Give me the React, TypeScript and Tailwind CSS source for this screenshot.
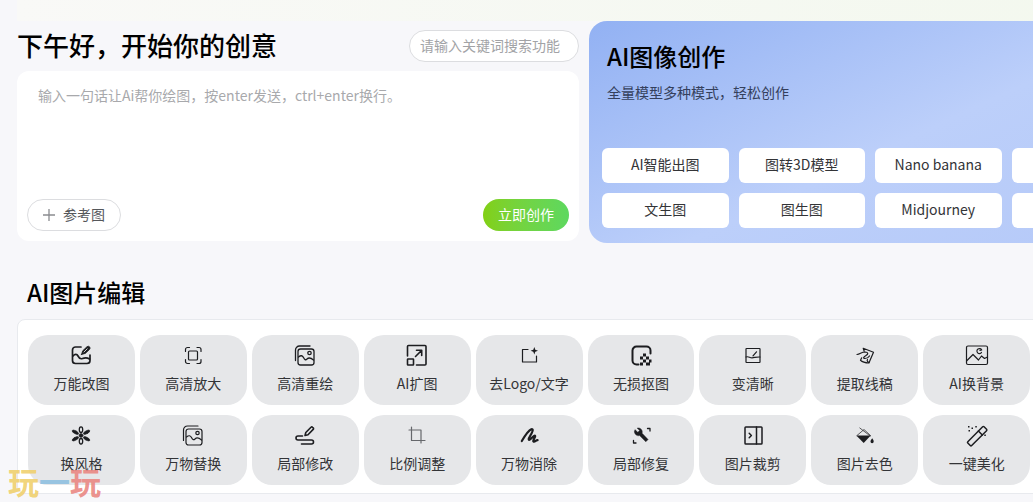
import type { ReactNode } from 'react';

type Tool = { label: string; icon: ReactNode };

const stackedPicture = (
  <>
    <path d="M2.5 16.5V6a4 4 0 0 1 4-4H17" />
    <rect x="5" y="5" width="16" height="16" rx="2.5" />
    <path d="M5.5 13c2.500-2 4-1.500 5 .5s2 3 3.500 1.500 3-2 6.500 1" />
    <circle cx="16.500" cy="9" r="1.700" />
  </>
);

const tools: Tool[] = [
  {
    label: '万能改图',
    icon: (
      <g strokeWidth="1.7">
        <path d="M12 3H6.500A3 3 0 0 0 3.500 6v10.500a3 3 0 0 0 3 3H18a3 3 0 0 0 3-3V11" />
        <path d="M4 12c2-2.500 4-2 5 0s2 3.500 4.500 2.500 4-1.500 7 .5" />
        <path d="M12.500 10.500l1.200-3.700 4.200-4a1.800 1.800 0 0 1 2.600 2.600l-4.200 4-3.800 1.100z" fill="currentColor" strokeWidth="0.8" />
        <path d="M15 8l3.200-3.200" stroke="#e6e7e9" strokeWidth="0.9" />
      </g>
    ),
  },
  {
    label: '高清放大',
    icon: (
      <g strokeWidth="1.200">
        <rect x="7.500" y="7" width="9" height="9" rx="1" />
        <path d="M4.500 7.500V5.500a2 2 0 0 1 2-2h2M16 3.500h2a2 2 0 0 1 2 2v2M20 15.500v2a2 2 0 0 1-2 2h-2M8.500 19.500h-2a2 2 0 0 1-2-2v-2" />
      </g>
    ),
  },
  { label: '高清重绘', icon: <g strokeWidth="1.300">{stackedPicture}</g> },
  {
    label: 'AI扩图',
    icon: (
      <g strokeWidth="1.600">
        <path d="M2.500 12V2.500a1 1 0 0 1 1-1h16.500a1 1 0 0 1 1 1V20a1 1 0 0 1-1 1h-8.500" />
        <rect x="2.500" y="15" width="6" height="6" rx="0.500" />
        <path d="M10.500 12.500l6-6M11.500 6.300h5.200v5.200" />
      </g>
    ),
  },
  {
    label: '去Logo/文字',
    icon: (
      <g strokeWidth="1.200">
        <path d="M11 5.500H5.500v12.500h14V12" />
        <path d="M17.300 3l1 2.700 2.700 1-2.700 1-1 2.700-1-2.700-2.700-1 2.700-1z" fill="currentColor" stroke="none" />
      </g>
    ),
  },
  {
    label: '无损抠图',
    icon: (
      <>
        <path d="M9.500 20.500H7.500A4 4 0 0 1 3.500 16.500V6.500A4 4 0 0 1 7.500 2.500h10A4 4 0 0 1 21.500 6.500v3" strokeWidth="2" />
        <path d="M14 9.500h3v3h-3zM11 12.500h3v3h-3zM17 12.500h3v3h-3zM14 15.500h3v3h-3zM20 15.500h2.500v3h-2.500zM11 18.500h3v3h-3zM17 18.500h4v3h-4z" fill="currentColor" stroke="none" />
      </>
    ),
  },
  {
    label: '变清晰',
    icon: (
      <g strokeWidth="1.200">
        <rect x="5" y="4.500" width="14" height="14" rx="0.500" />
        <path d="M5 13c2.500-1 3.500.8 6 .8s4-1 8-.8M12 11.800l3.500-4" />
      </g>
    ),
  },
  {
    label: '提取线稿',
    icon: (
      <g strokeWidth="1.200">
        <path d="M10.200 4.300l10.300 3.900-4.600 10.800c-3-.2-6.500-1-8.400-2.800l1.200-2.400M10.200 4.300l1 3" />
        <path d="M4 10.500c3-.2 4.500-2.500 8-2.500 3.500.2 3.500 2 1 3.500s-3.300 3-1 3 3.500-1 4.500-2.500M14.500 15.500c-1 1.500.5 2.500 1.500 3" />
      </g>
    ),
  },
  {
    label: 'AI换背景',
    icon: (
      <g strokeWidth="1.200">
        <rect x="1.500" y="2" width="21" height="18.500" rx="1.500" />
        <path d="M2 16.500l6-6 5.500 5.500 3-4 3 2.500 3-1.500M16.500 8.500a2.500 2.500 0 1 1 .2-2.500l-1.700.3" />
      </g>
    ),
  },
  {
    label: '换风格',
    icon: (
      <g strokeWidth="1.300">
        <ellipse cx="12" cy="5.700" rx="1.700" ry="2.800" />
        <ellipse cx="12" cy="17.300" rx="1.700" ry="2.800" />
        <g fill="currentColor" strokeWidth="0.500">
          <ellipse cx="12" cy="5" rx="1.500" ry="3.600" transform="rotate(60 12 11.500)" />
          <ellipse cx="12" cy="5" rx="1.500" ry="3.600" transform="rotate(120 12 11.500)" />
          <ellipse cx="12" cy="5" rx="1.500" ry="3.600" transform="rotate(240 12 11.500)" />
          <ellipse cx="12" cy="5" rx="1.500" ry="3.600" transform="rotate(300 12 11.500)" />
          <circle cx="12" cy="11.500" r="2" />
        </g>
      </g>
    ),
  },
  { label: '万物替换', icon: <g strokeWidth="1.200">{stackedPicture}</g> },
  {
    label: '局部修改',
    icon: (
      <g strokeWidth="1.600">
        <path d="M9.500 12H5a2 2 0 0 0 0 4h13.500a2 2 0 0 1 0 4H8.500" />
        <path d="M12 11.500l.8-3L18 3.200a1 1 0 0 1 1.500 0l.7.7a1 1 0 0 1 0 1.500L15 10.700z" />
      </g>
    ),
  },
  {
    label: '比例调整',
    icon: (
      <path d="M6.500 3v13.500H20M4 6h12v13" strokeWidth="1.200" stroke="#66686c" />
    ),
  },
  {
    label: '万物消除',
    icon: (
      <path d="M4.800 17c3-5 6.500-10.500 9.500-11.700 2.200-.6 1.500 1.700.2 4.200s-3.800 6-2.300 6.300 4-4.500 5.600-4.200-2.800 5.500-1.200 6 2.400-1.600 4-1.400" strokeWidth="2.200" />
    ),
  },
  {
    label: '局部修复',
    icon: (
      <>
        <path d="M18.500 4.500H21V7M4.500 16.500V19H7" strokeWidth="1.300" />
        <path d="M6.200 5.800l2.600 2.500 1.800-1.800-2.500-2.400c2.500-.8 5.300 1 5.200 3.900l-.2 1.200 6 6.300-2.300 2.300-6.200-6.200c-2.900.8-5.500-1.500-5.200-4.500z" fill="currentColor" strokeWidth="0.400" />
      </>
    ),
  },
  {
    label: '图片裁剪',
    icon: (
      <g strokeWidth="1.500">
        <rect x="4" y="3" width="17" height="17" rx="0.800" />
        <path d="M15.500 3v17M8.200 9.300l2.200 2.200-2.200 2.200" />
      </g>
    ),
  },
  {
    label: '图片去色',
    icon: (
      <>
        <path d="M6.800 4l10.400 8M4 11.500l7-6 6.500 6" strokeWidth="0.700" />
        <path d="M3.300 11.500h14.400l-7 7.500z" fill="currentColor" stroke="none" />
        <path d="M19.200 14.300c1 1.400 1.500 2.300 1.500 3.200a1.500 1.700 0 0 1-3.200 0c0-.9.700-1.800 1.700-3.200z" fill="currentColor" stroke="none" />
      </>
    ),
  },
  {
    label: '一键美化',
    icon: (
      <>
        <g transform="rotate(45 12 12)" strokeWidth="1.500">
          <rect x="9.500" y="0.500" width="5.500" height="23" rx="1" />
          <path d="M9.500 7.500H15" />
        </g>
        <path d="M3 2h1.500v1.500H3zM6.500 3.500H8V5H6.500zM10.300 2h1.500v1.500h-1.500zM3.500 6H5v1.500H3.500zM19.300 10.500h1.500V12h-1.500z" fill="currentColor" stroke="none" />
      </>
    ),
  },
  { label: 'AI消除', icon: <path d="M5 16l8-9 6 5-6 7H8z" strokeWidth="1.400" /> },
  { label: '智能修图', icon: <path d="M4 19L16 7M14 3v4M12 5h4M19 10v4M17 12h4" strokeWidth="1.400" /> },
];

/* Two rows of ten: each row ends with an entry that lies past the fold. */
const rows: Tool[] = [...tools.slice(0, 9), tools[18], ...tools.slice(9, 18), tools[19]];

const modes = ['AI智能出图', '图转3D模型', 'Nano banana', '换装', '文生图', '图生图', 'Midjourney', '更多'];

export default function App() {
  return (
    <div className="relative min-h-screen overflow-hidden bg-[#f7f7fa] font-['Noto_Sans_CJK_SC','Noto_Sans',sans-serif] text-[#333437]">
      <main className="min-w-[1151px] pl-[17px]">
        <div className="h-[21px] bg-linear-to-r from-[#f9f9f7] to-[#f3f8ee]" />

        <div className="grid grid-cols-2 gap-[10px]">
          <section className="flex flex-col">
            <div className="flex h-[50px] items-start justify-between">
              <h1 className="text-[26px] leading-[48px] font-medium text-black">下午好，开始你的创意</h1>
              <input
                type="text"
                aria-label="搜索功能"
                placeholder="请输入关键词搜索功能"
                className="mt-[9px] h-8 w-[170px] rounded-full border border-[#dcdde0] bg-white px-[10px] pb-[2px] text-sm outline-none placeholder:text-[#a2a3a6]"
              />
            </div>
            <form className="flex h-[170px] flex-col rounded-xl bg-white p-[10px]" onSubmit={(e) => e.preventDefault()}>
              <textarea
                aria-label="创意描述"
                placeholder="输入一句话让Ai帮你绘图，按enter发送，ctrl+enter换行。"
                className="flex-1 resize-none px-[11px] py-[3px] text-sm leading-[22px] outline-none placeholder:text-[#a8a9ac]"
              />
              <div className="flex items-center justify-between">
                <button type="button" className="flex h-8 items-center gap-2 rounded-full border border-[#dcdde0] px-[15px] text-sm text-[#55575b]">
                  <svg viewBox="0 0 12 12" className="size-3" fill="none" stroke="#8a8c90" strokeWidth="1.300" aria-hidden="true">
                    <path d="M6 0v12M0 6h12" />
                  </svg>
                  <span className="pb-[2px]">参考图</span>
                </button>
                <button type="submit" className="h-8 rounded-full bg-linear-to-r from-[#82d012] to-[#5dd85f] px-[15px] pb-[2px] text-sm text-white">
                  立即创作
                </button>
              </div>
            </form>
          </section>

          <section className="flex h-[222px] flex-col justify-between rounded-[18px] bg-linear-[155deg,#92b1f3_0%,#bccffa_55%,#b5c9f8_100%] px-[13px] pt-[17px] pb-[15px]">
            <div className="px-[5px]">
              <h2 className="text-2xl leading-9 font-medium text-black">AI图像创作</h2>
              <p className="mt-2 text-sm leading-5 text-[#34405c]">全量模型多种模式，轻松创作</p>
            </div>
            <div className="grid grid-cols-4 gap-[10px]">
              {modes.map((mode) => (
                <button key={mode} type="button" className="h-[35px] rounded-md bg-white pb-[3px] text-sm whitespace-nowrap">
                  {mode}
                </button>
              ))}
            </div>
          </section>
        </div>

        <section className="-mr-[2px] pt-[31px]">
          <h2 className="pl-[10px] text-2xl leading-9 font-medium text-black">AI图片编辑</h2>
          <div className="mt-[9px] grid grid-cols-10 gap-x-[5px] gap-y-[10px] rounded-lg border border-[#e8eaee] bg-white px-[10px] pt-[15px] pb-2">
            {rows.map((tool) => (
              <button key={tool.label} type="button" className="flex h-[70px] flex-col items-center rounded-[20px] bg-[#e6e7e9] pt-[9px] text-sm leading-5 whitespace-nowrap">
                <svg
                  viewBox="0 0 24 24"
                  className="mb-[5px] size-6 shrink-0 text-[#1c1d20]"
                  fill="none"
                  stroke="currentColor"
                  strokeLinecap="round"
                  strokeLinejoin="round"
                  aria-hidden="true"
                >
                  {tool.icon}
                </svg>
                {tool.label}
              </button>
            ))}
          </div>
        </section>
      </main>

      <div className="pointer-events-none absolute bottom-[3px] left-2 flex text-[31px] leading-9 font-bold">
        <span className="text-[#f0cf6b]/90">玩</span>
        <span className="text-[#8dbfe0]/90">一</span>
        <span className="text-[#ea8580]/90">玩</span>
      </div>
    </div>
  );
}
